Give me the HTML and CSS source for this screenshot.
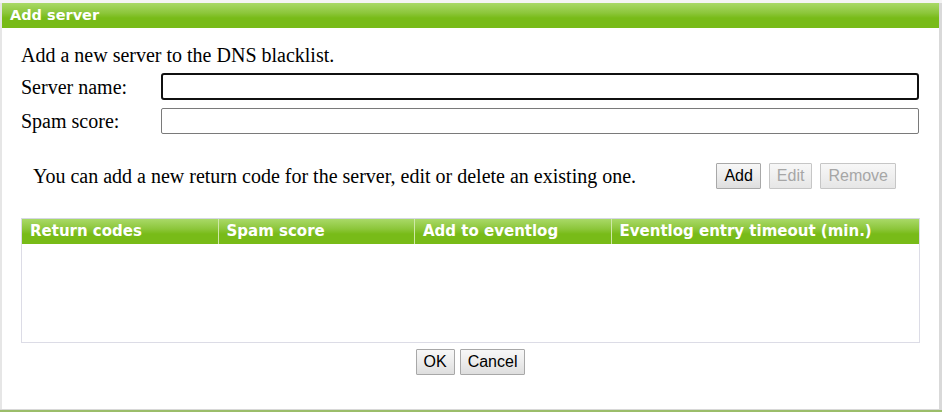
FILE: index.html
```html
<!DOCTYPE html>
<html>
<head>
<meta charset="utf-8">
<link rel="stylesheet" href="styles.css">
</head>
<body>
<div class="topstrip"></div>
<div class="dialog">
  <div class="titlebar">Add server</div>
  <div class="content">
    <p class="intro">Add a new server to the DNS blacklist.</p>
    <div class="formrow">
      <label class="lbl">Server name:</label>
      <input class="field focused" type="text">
    </div>
    <div class="formrow second">
      <label class="lbl">Spam score:</label>
      <input class="field" type="text">
    </div>
    <div class="coderow">
      <span class="codetext">You can add a new return code for the server, edit or delete an existing one.</span>
      <div class="btngroup">
        <button class="btn">Add</button>
        <button class="btn disabled">Edit</button>
        <button class="btn disabled">Remove</button>
      </div>
    </div>
    <div class="grid">
      <div class="gridhead">
        <div class="col">Return codes</div>
        <div class="col">Spam score</div>
        <div class="col">Add to eventlog</div>
        <div class="col last">Eventlog entry timeout (min.)</div>
      </div>
      <div class="gridbody"></div>
    </div>
    <div class="footer">
      <button class="btn">OK</button>
      <button class="btn">Cancel</button>
    </div>
  </div>
</div>
<div class="bottomstrip"></div>
</body>
</html>
```
FILE: styles.css
```css
html, body {
  margin: 0;
  padding: 0;
}
body {
  background: #f2f2f2;
  width: 942px;
  height: 412px;
  overflow: hidden;
}
.topstrip {
  height: 3px;
  background: #f4f4f4;
}
.dialog {
  width: 937px;
  height: 406px;
  background: #ffffff;
  border-left: 2px solid #e6e6e6;
  border-right: 3px solid #d9d9d9;
  display: flex;
  flex-direction: column;
}
.titlebar {
  height: 25px;
  line-height: 25px;
  background: linear-gradient(to bottom, #a9d967 0%, #8cc63a 40%, #78bb18 60%, #78bb18 100%);
  color: #ffffff;
  font-family: "DejaVu Sans", Verdana, sans-serif;
  font-weight: bold;
  font-size: 14.5px;
  padding-left: 8px;
}
.content {
  padding: 17px 19px 0 19px;
  font-family: "Liberation Serif", "Times New Roman", serif;
  font-size: 20px;
  color: #000;
  display: flex;
  flex-direction: column;
}
.intro {
  margin: 0;
  height: 20px;
  line-height: 20px;
}
.formrow {
  display: flex;
  align-items: center;
  margin-top: 8px;
}
.formrow.second {
  margin-top: 8px;
}
.lbl {
  width: 140px;
  line-height: 20px;
}
.field {
  box-sizing: border-box;
  width: 758px;
  height: 26px;
  border: 1px solid #7a7a7a;
  border-radius: 2px;
  margin: 0;
  padding: 0 4px;
  background: #fff;
}
.field.focused {
  height: 27px;
  border: 2px solid #101010;
  border-radius: 3px;
}
.coderow {
  display: flex;
  align-items: center;
  justify-content: space-between;
  margin-top: 29px;
  padding-left: 12px;
  padding-right: 24px;
}
.codetext {
  line-height: 20px;
}
.btngroup {
  display: flex;
  gap: 8px;
}
.btn {
  box-sizing: border-box;
  height: 26px;
  padding: 0 7px;
  margin: 0;
  font-family: "Liberation Sans", Arial, sans-serif;
  font-size: 16px;
  color: #000;
  background: linear-gradient(to bottom, #f7f7f7 0%, #ececec 50%, #dedede 100%);
  border: 1px solid #a8a8a8;
  border-radius: 1px;
}
.btn.disabled {
  color: #a6a6a6;
  border-color: #c6c6c6;
  background: linear-gradient(to bottom, #f7f7f7 0%, #efefef 50%, #e6e6e6 100%);
}
.grid {
  margin-top: 29px;
  width: 899px;
  height: 125px;
  box-sizing: border-box;
  border: 1px solid #dcdce6;
  border-top-color: #d4d8e2;
  display: flex;
  flex-direction: column;
}
.gridhead {
  display: flex;
  height: 25px;
  background: linear-gradient(to bottom, #a9d967 0%, #8cc63a 40%, #78bb18 60%, #78bb18 100%);
}
.col {
  box-sizing: border-box;
  width: 196.5px;
  line-height: 25px;
  padding-left: 8px;
  color: #fff;
  font-family: "DejaVu Sans", Verdana, sans-serif;
  font-weight: bold;
  font-size: 15px;
  border-right: 1px solid #cfe8a8;
  white-space: nowrap;
}
.col.last {
  flex: 1;
  border-right: none;
}
.gridbody {
  flex: 1;
}
.footer {
  display: flex;
  justify-content: center;
  gap: 5px;
  margin-top: 6px;
}
.bottomstrip {
  height: 3px;
  background: linear-gradient(to bottom, #d8d8d8 0%, #d8d8d8 33%, #9bbd6a 34%, #9bbd6a 100%);
}
```
